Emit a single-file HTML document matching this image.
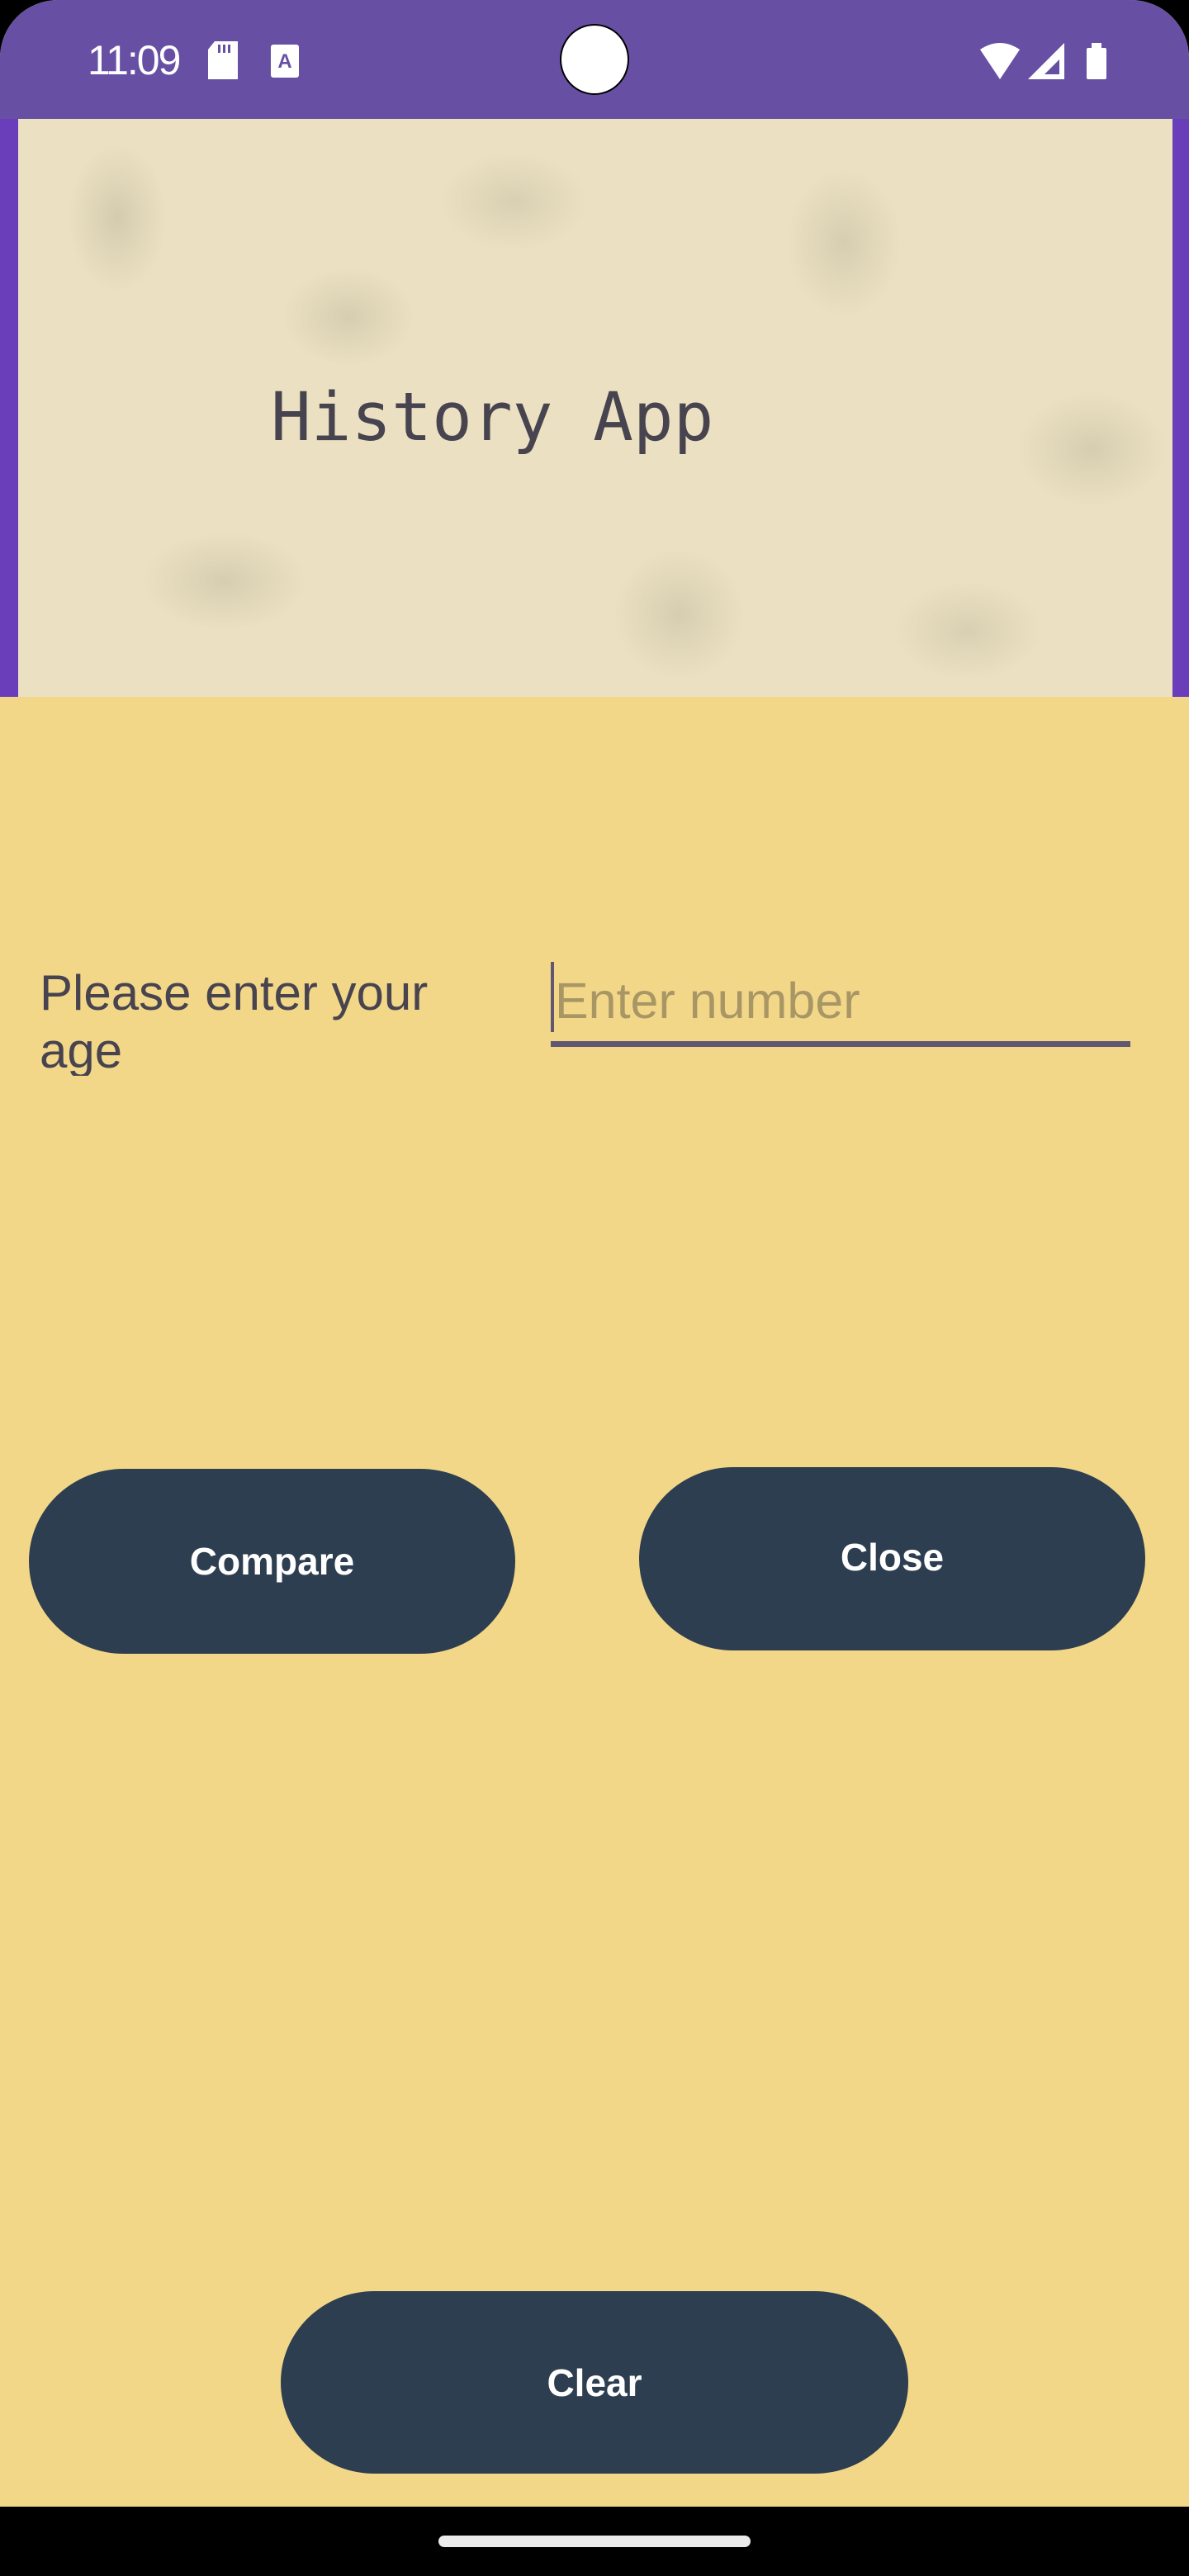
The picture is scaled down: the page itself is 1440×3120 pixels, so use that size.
<!DOCTYPE html>
<html><head><meta charset="utf-8">
<style>
*{margin:0;padding:0;box-sizing:border-box}
html,body{width:1440px;height:3120px;overflow:hidden;background:#000}
#screen{position:absolute;left:0;top:0;width:1440px;height:3120px;background:#F3D789;border-radius:70px 70px 0 0;overflow:hidden}
#status{position:absolute;left:0;top:0;width:1440px;height:144px;background:#6750A4}
#time{position:absolute;left:106px;top:44px;font:50px "Liberation Sans",sans-serif;color:#fff;letter-spacing:-2px}
#header{position:absolute;left:0;top:144px;width:1440px;height:700px;background:#6A3DBA}
#img{position:absolute;left:22px;top:0;width:1398px;height:700px;
background:
radial-gradient(ellipse 60px 90px at 120px 120px,rgba(120,110,90,.2),transparent),
radial-gradient(ellipse 80px 60px at 400px 240px,rgba(120,110,90,.18),transparent),
radial-gradient(ellipse 70px 90px at 1000px 150px,rgba(120,110,90,.18),transparent),
radial-gradient(ellipse 90px 70px at 1300px 400px,rgba(120,110,90,.18),transparent),
radial-gradient(ellipse 100px 60px at 250px 560px,rgba(120,110,90,.18),transparent),
radial-gradient(ellipse 80px 80px at 800px 600px,rgba(120,110,90,.18),transparent),
radial-gradient(ellipse 90px 60px at 600px 100px,rgba(120,110,90,.16),transparent),
radial-gradient(ellipse 90px 60px at 1150px 620px,rgba(120,110,90,.16),transparent),
#EBE1C2}
#title{position:absolute;left:328px;top:322px;font:81px "DejaVu Sans Mono","Liberation Mono",monospace;color:#48444F;line-height:1}
#label{position:absolute;left:48px;top:1168px;width:580px;height:135px;overflow:hidden;font:60px "Liberation Sans",sans-serif;color:#48444F;line-height:70px}
#ph{position:absolute;left:672px;top:1182px;font:61px "Liberation Sans",sans-serif;color:#A89665;line-height:1}
#cursor{position:absolute;left:667px;top:1165px;width:4px;height:85px;background:#5F5870}
#line{position:absolute;left:667px;top:1261px;width:702px;height:7px;background:#5F5870}
.btn{position:absolute;background:#2D3E50;border-radius:115px/112px;color:#fff;font:bold 46px "Liberation Sans",sans-serif;display:flex;align-items:center;justify-content:center}
#nav{position:absolute;left:0;top:3036px;width:1440px;height:84px;background:#000}
#home{position:absolute;left:531px;top:3071px;width:378px;height:14px;border-radius:7px;background:#ebebeb}
</style></head><body>
<div id="screen">
<div id="status">
<div id="time">11:09</div>
<svg style="position:absolute;left:250px;top:50px" width="40" height="46" viewBox="0 0 40 46"><path d="M10 0H38V46H2V10Z" fill="#fff"/><rect x="14" y="4" width="3" height="10" fill="#6750A4"/><rect x="20" y="4" width="3" height="10" fill="#6750A4"/><rect x="26" y="4" width="3" height="10" fill="#6750A4"/></svg>
<svg style="position:absolute;left:328px;top:54px" width="34" height="40" viewBox="0 0 34 40"><rect width="34" height="40" rx="3" fill="#fff"/><text x="17" y="28" font-family="Liberation Sans" font-weight="bold" font-size="24" fill="#6750A4" text-anchor="middle">A</text></svg>
<div style="position:absolute;left:678px;top:29px;width:84px;height:86px;border-radius:50%;background:#fff;border:2px solid #000"></div>
<svg style="position:absolute;left:1185px;top:50px" width="160" height="46" viewBox="0 0 160 46"><path d="M2 10Q26 -6 50 10L26 46Z" fill="#fff"/><path d="M60 46L104 2V46Z" fill="#fff"/><path d="M80 40L98 22V40Z" fill="#6750A4"/><rect x="131" y="8" width="24" height="38" rx="2" fill="#fff"/><rect x="137" y="2" width="12" height="8" fill="#fff"/></svg>
</div>
<div id="header"><div id="img"></div><div id="title">History App</div></div>
<div id="label">Please enter your age</div>
<div id="ph">Enter number</div>
<div id="cursor"></div>
<div id="line"></div>
<div class="btn" style="left:35px;top:1779px;width:589px;height:224px">Compare</div>
<div class="btn" style="left:774px;top:1777px;width:613px;height:222px;padding-bottom:4px">Close</div>
<div class="btn" style="left:340px;top:2775px;width:760px;height:221px">Clear</div>
<div id="nav"></div><div id="home"></div>
</div>
</body></html>
